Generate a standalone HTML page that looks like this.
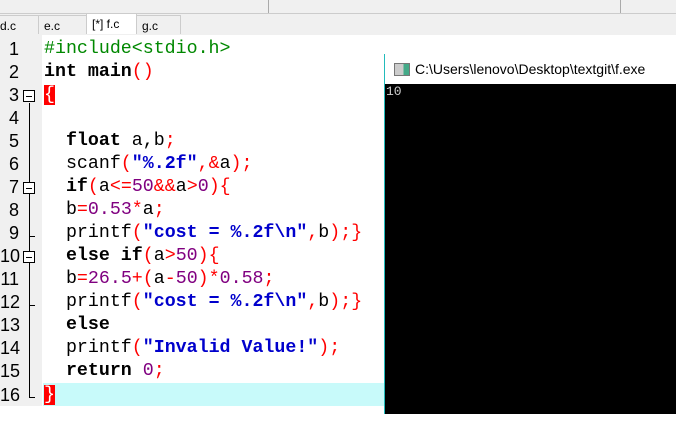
<!DOCTYPE html><html><head><style>
body{margin:0;width:676px;height:406px;overflow:hidden;background:#fff;position:relative;font-family:"Liberation Sans",sans-serif}
.top{position:absolute;left:0;top:0;width:676px;height:13px;background:#f0f0f0;border-bottom:1px solid #ccc}
.tabs{position:absolute;left:0;top:14px;width:676px;height:21px;background:#f0f0f0}
.tab{position:absolute;top:1px;height:19px;border:1px solid #ccc;border-bottom:none;background:#f0f0f0;font-size:12px;line-height:20px;color:#000;padding-left:5px;box-sizing:border-box}
.gut{position:absolute;left:0;top:35px;width:42px;height:371px;background:#f0f0f0}
.code{position:absolute;left:0;top:37.5px;font-family:"Liberation Mono",monospace;font-size:18.3px;line-height:23.07px;white-space:pre}
.ln{position:absolute;left:0;width:19px;text-align:right;font-family:"Liberation Sans",sans-serif;font-size:18px}
.tx{position:absolute;left:44px}
b{font-weight:bold}.r{color:#f00}.n{color:#800080}.s{color:#00c;font-weight:bold}.g{color:#080}
.box{position:absolute;left:23px;width:10px;height:10px;border:1px solid #000;background:#fff}
.box:after{content:"";position:absolute;left:2px;top:4.5px;width:6px;height:1px;background:#000}
.vl{position:absolute;left:29px;width:1px;background:#000}
.hl{position:absolute;left:43px;top:383px;width:342px;height:23px;background:#c8fafa}
.rb{background:#f00;color:#fff}
.con{position:absolute;left:384px;top:54px;width:300px;height:360px;border-left:1px solid #2bb;background:#000}
.tt{height:30px;background:#fff;font-size:14px;line-height:30px;padding-left:30px;color:#000;position:relative}
.ic{position:absolute;left:9px;top:9px;width:14px;height:11px;border:1px solid #777;background:linear-gradient(90deg,#ccc 60%,#4a8 60%)}
</style></head><body>
<div class="top"><div style="position:absolute;left:268px;top:0;width:1px;height:13px;background:#aaa"></div><div style="position:absolute;left:620px;top:0;width:1px;height:13px;background:#aaa"></div></div>
<div class="tabs">
<div class="tab" style="left:-6px;width:45px">d.c</div>
<div class="tab" style="left:38px;width:49px">e.c</div>
<div class="tab" style="left:86px;width:51px;background:#fff;height:21px;top:-1px">[*] f.c</div>
<div class="tab" style="left:136px;width:45px">g.c</div>
</div>
<div class="gut"></div>
<div class="hl"></div>
<div class="vl" style="top:103px;height:294px"></div>
<div style="position:absolute;left:29px;top:236px;width:6px;height:1px;background:#000"></div>
<div style="position:absolute;left:29px;top:305px;width:6px;height:1px;background:#000"></div>
<div style="position:absolute;left:29px;top:397px;width:6px;height:1px;background:#000"></div>
<div class="box" style="top:90px"></div>
<div class="box" style="top:182px"></div>
<div class="box" style="top:251px"></div>
<div class="code">
<div class="ln" style="top:0">1</div><div class="tx g" style="top:0">#include&lt;stdio.h&gt;</div>
<div class="ln" style="top:23.07px">2</div><div class="tx" style="top:23.07px"><b>int main</b><span class="r">()</span></div>
<div class="ln" style="top:46.14px">3</div><div class="tx" style="top:46.14px"><span class="rb">{</span></div>
<div class="ln" style="top:69.21px">4</div>
<div class="ln" style="top:92.28px">5</div><div class="tx" style="top:92.28px">  <b>float</b> a,b<span class="r">;</span></div>
<div class="ln" style="top:115.35px">6</div><div class="tx" style="top:115.35px">  scanf<span class="r">(</span><span class="s">"%.2f"</span><span class="r">,&amp;</span>a<span class="r">);</span></div>
<div class="ln" style="top:138.42px">7</div><div class="tx" style="top:138.42px">  <b>if</b><span class="r">(</span>a<span class="r">&lt;=</span><span class="n">50</span><span class="r">&amp;&amp;</span>a<span class="r">&gt;</span><span class="n">0</span><span class="r">){</span></div>
<div class="ln" style="top:161.49px">8</div><div class="tx" style="top:161.49px">  b<span class="r">=</span><span class="n">0.53</span><span class="r">*</span>a<span class="r">;</span></div>
<div class="ln" style="top:184.56px">9</div><div class="tx" style="top:184.56px">  printf<span class="r">(</span><span class="s">"cost = %.2f\n"</span><span class="r">,</span>b<span class="r">);}</span></div>
<div class="ln" style="top:207.63px">10</div><div class="tx" style="top:207.63px">  <b>else if</b><span class="r">(</span>a<span class="r">&gt;</span><span class="n">50</span><span class="r">){</span></div>
<div class="ln" style="top:230.7px">11</div><div class="tx" style="top:230.7px">  b<span class="r">=</span><span class="n">26.5</span><span class="r">+(</span>a<span class="r">-</span><span class="n">50</span><span class="r">)*</span><span class="n">0.58</span><span class="r">;</span></div>
<div class="ln" style="top:253.77px">12</div><div class="tx" style="top:253.77px">  printf<span class="r">(</span><span class="s">"cost = %.2f\n"</span><span class="r">,</span>b<span class="r">);}</span></div>
<div class="ln" style="top:276.84px">13</div><div class="tx" style="top:276.84px">  <b>else</b></div>
<div class="ln" style="top:299.91px">14</div><div class="tx" style="top:299.91px">  printf<span class="r">(</span><span class="s">"Invalid Value!"</span><span class="r">);</span></div>
<div class="ln" style="top:322.98px">15</div><div class="tx" style="top:322.98px">  <b>return</b> <span class="n">0</span><span class="r">;</span></div>
<div class="ln" style="top:346.05px">16</div><div class="tx" style="top:346.05px"><span class="rb">}</span></div>
</div>
<div class="con"><div class="tt"><div class="ic"></div>C:\Users\lenovo\Desktop\textgit\f.exe</div>
<div style="color:#ccc;font-family:'Liberation Mono',monospace;font-size:13px;line-height:16px;padding-left:1px">10</div></div>
</body></html>
